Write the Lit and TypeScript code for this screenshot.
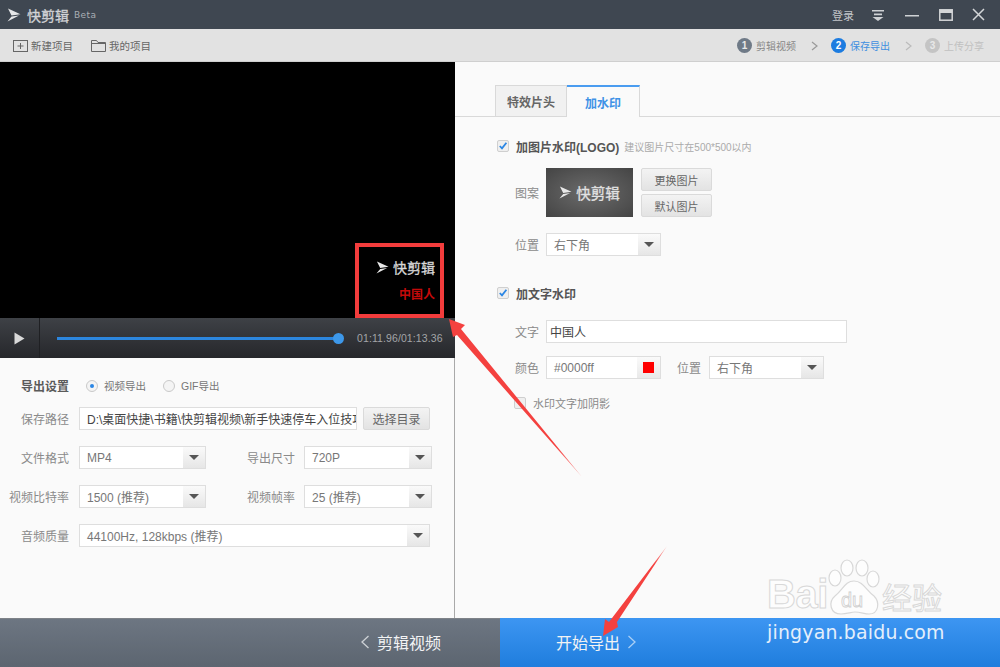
import { LitElement, html, css, svg } from 'lit';
import { customElement } from 'lit/decorators.js';

// 快剪辑 logo arrow
const logoMark = (w: number, color: string) => html`<svg width=${w} height=${w} viewBox="0 0 14 14">
  <path d="M1 0.500 L13.500 6.300 L4.500 7.600 Z M4.500 8.600 L12 7.600 L0.500 13.500 Z" fill=${color}></path>
</svg>`;

const arrowSvg = svg`
  <defs>
    <linearGradient id="fadeA" x1="449" y1="319" x2="582" y2="477" gradientUnits="userSpaceOnUse">
      <stop offset="0.8" stop-color="#f4413f"></stop><stop offset="1" stop-color="#f9a09e"></stop>
    </linearGradient>
    <linearGradient id="fadeB" x1="603" y1="636" x2="667" y2="546" gradientUnits="userSpaceOnUse">
      <stop offset="0.8" stop-color="#f4413f"></stop><stop offset="1" stop-color="#fbc0be"></stop>
    </linearGradient>
  </defs>
  <path d="M449 319 L465 325 L461 329 L582 477 L457 335 L453 337 Z" fill="url(#fadeA)"></path>
  <path d="M667 546 L617 622 L618 627 L603 636 L605 619 L609 622 Z" fill="url(#fadeB)"></path>
`;

@customElement('app-root')
export class AppRoot extends LitElement {
  static styles = css`
    :host {
      display: block;
      position: relative;
      width: 1000px;
      height: 667px;
      overflow: hidden;
      font-family: "Liberation Sans", "Noto Sans CJK SC", sans-serif;
      font-size: 12px;
      color: #777;
      background: #fafafa;
    }
    .app { display: grid; grid-template-rows: 29px 33px 556px 49px; height: 667px; }

    /* 상단 타이틀바 */
    .title { background: #3f4751; display: flex; align-items: center; padding: 0 15px 0 7px; color: #bfc3c8; }
    .brand { display: flex; align-items: center; font-size: 14px; color: #d2d4d7; -webkit-text-stroke: 0.3px #d2d4d7; }
    .brand svg { margin-right: 6px; }
    .brand .beta { font-size: 9px; margin-left: 5px; color: #a9aeb4; letter-spacing: 0.4px; -webkit-text-stroke: 0; font-family: "DejaVu Sans", sans-serif; }
    .win { margin-left: auto; display: flex; align-items: center; }
    .win .login { font-size: 11px; margin-right: 17px; color: #c2c5c9; }
    .win svg { display: block; }
    .ic-menu { margin-right: 20px; }
    .ic-min { margin-right: 20px; }
    .ic-max { margin-right: 19px; }

    /* 툴바 */
    .bar { background: #e2e2e2; border-bottom: 1px solid #cfcfcf; display: flex; align-items: center; padding: 1px 16px 0 13px; font-size: 10.5px; color: #666; box-sizing: border-box; }
    .tool { display: flex; align-items: center; gap: 3px; margin-right: 18px; }
    .steps { margin-left: auto; display: flex; align-items: center; font-size: 10px; color: #888; }
    .step { display: flex; align-items: center; gap: 4px; }
    .num { width: 15px; height: 15px; border-radius: 50%; background: #6f7a87; color: #e8e8e8; font-size: 10px; font-weight: 700; display: flex; align-items: center; justify-content: center; }
    .step.on { color: #3f8fe0; }
    .step.on .num { background: #1c7ce0; color: #fff; }
    .step.off { color: #c0c0c0; }
    .step.off .num { background: #c4c4c4; }
    .chev { margin: 0 13px 0 15px; display: block; }

    .main { display: grid; grid-template-columns: 455px 1fr; min-height: 0; }
    .left { border-right: 1px solid #a9a9a9; display: grid; grid-template-rows: 256px 40px 260px; background: #fafafa; }
    .right { background: #fafafa; }

    /* 영상 미리보기 */
    .video { background: #000; display: flex; flex-direction: column; align-items: flex-end; justify-content: flex-end; padding: 0 21px 16px 0; box-sizing: border-box; }
    .video .wm { display: flex; align-items: center; color: #d8d8d8; font-size: 14px; -webkit-text-stroke: 0.3px #d8d8d8; margin-bottom: 8px; }
    .video .wm svg { margin-right: 4px; }
    .video .cn { color: #c40a0a; font-size: 12px; font-weight: 700; }

    .ctrl { background: linear-gradient(#3e4146, #26272b); display: flex; align-items: center; }
    .play { width: 39px; height: 40px; border-right: 1px solid #1f2023; display: flex; align-items: center; justify-content: center; }
    .track { width: 286px; height: 3px; background: #2c86de; margin-left: 17px; position: relative; }
    .thumb { position: absolute; right: -1px; top: -4px; width: 11px; height: 11px; border-radius: 50%; background: #3d98ea; }
    .time { margin-left: 14px; font-size: 10.5px; color: #a3a5a8; letter-spacing: 0.1px; white-space: nowrap; }

    /* 내보내기 설정 */
    .form { padding: 16px 24px 0 0; display: flex; flex-direction: column; }
    .row { display: flex; align-items: center; height: 23px; margin-bottom: 16px; }
    .row.top { margin-bottom: 10px; }
    .lbl { width: 69px; margin-right: 10px; text-align: right; font-size: 12px; color: #8a8a8a; flex: none; white-space: nowrap; }
    .lbl.head { font-weight: 700; color: #5a5a5a; }
    .radio { display: flex; align-items: center; font-size: 10.5px; color: #777; margin-right: 17px; gap: 6px; }
    .radio.first { margin-left: 7px; }
    .dot { width: 10px; height: 10px; border-radius: 50%; border: 1px solid #c9c9c9; background: #f4f4f4; display: flex; align-items: center; justify-content: center; }
    .dot.on::after { content: ""; width: 4px; height: 4px; border-radius: 50%; background: #2b86e4; }

    .field { height: 23px; box-sizing: border-box; background: #fff; border: 1px solid #dedede; display: flex; align-items: center; padding-left: 7px; font-size: 12px; color: #777; position: relative; white-space: nowrap; overflow: hidden; }
    .drop { position: absolute; right: 0; top: 0; bottom: 0; width: 22px; background: linear-gradient(#fafafa, #e6e6e6); display: flex; align-items: center; justify-content: center; }
    .drop::after { content: ""; border-left: 5px solid transparent; border-right: 5px solid transparent; border-top: 5px solid #555; }
    .btn { height: 23px; box-sizing: border-box; background: linear-gradient(#f3f3f3, #e3e3e3); border: 1px solid #dadada; border-radius: 2px; display: flex; align-items: center; justify-content: center; font-size: 11px; color: #666; }
    .btn.pick { width: 67px; margin-left: 6px; font-size: 12px; }
    .path { width: 278px; color: #444; }
    .sel-l { width: 127px; }
    .sel-r { width: 128px; }
    .sel-w { width: 351px; }
    .lbl-2 { width: 47px; margin: 0 10px 0 41px; text-align: right; font-size: 12px; color: #8a8a8a; white-space: nowrap; }

    /* 오른쪽 탭 */
    .tabs { display: flex; height: 31px; margin-top: 23px; padding-left: 40px; border-bottom: 1px solid #d9d9d9; }
    .tab { width: 72px; height: 31px; box-sizing: border-box; display: flex; align-items: center; justify-content: center; font-weight: 700; font-size: 12px; color: #666; background: #f1f1f1; border: 1px solid #d9d9d9; border-bottom: none; }
    .tab.on { width: 73px; background: #fafafa; color: #3f92e6; border-top: 2px solid #4a9cf0; border-left: none; height: 32px; }

    .panel { padding: 22px 0 0 42px; display: flex; flex-direction: column; }
    .check { display: flex; align-items: center; height: 14px; }
    .box { width: 12px; height: 12px; box-sizing: border-box; border: 1px solid #cfcfcf; border-radius: 2px; background: #efefef; margin-right: 7px; flex: none; }
    .box svg { display: block; }
    .check b { font-size: 12px; color: #555; }
    .check.second { margin-top: 30px; }
    .hint { font-size: 10px; color: #aaa; margin-left: 5px; }
    .line { display: flex; align-items: center; margin-top: 15px; }
    .line.pos { margin-top: 16px; }
    .line.txt { margin-top: 20px; }
    .line.col { margin-top: 13px; }
    .k { width: 25px; text-align: right; margin-right: 7px; margin-left: 17px; font-size: 12px; color: #8a8a8a; flex: none; white-space: nowrap; }
    .k.pos2 { width: 23px; margin: 0 9px 0 16px; }
    .logo { width: 87px; height: 49px; background: radial-gradient(#6c6c6c, #444); display: flex; align-items: center; justify-content: center; color: #e2e2e2; font-size: 14.5px; -webkit-text-stroke: 0.3px #e2e2e2; gap: 4px; }
    .btns { display: flex; flex-direction: column; gap: 3px; margin-left: 8px; }
    .btns .btn { width: 71px; }
    .sel-a { width: 115px; }
    .text-in { width: 301px; color: #444; padding-left: 3px; }
    .swatch { position: absolute; right: 0; top: 0; bottom: 0; width: 23px; background: linear-gradient(#fafafa, #e9e9e9); display: flex; align-items: center; justify-content: center; }
    .swatch::after { content: ""; width: 11px; height: 11px; background: #f00; }
    .shadow { margin: 17px 0 0 17px; font-size: 11px; color: #888; }

    /* 하단 버튼 */
    .foot { display: grid; grid-template-columns: 500px 500px; }
    .back, .next { display: flex; align-items: center; justify-content: flex-start; gap: 7px; font-size: 16px; color: #f2f3f4; padding-bottom: 2px; box-sizing: border-box; }
    .back { background: linear-gradient(#6d7682, #5c6570); padding-left: 360px; border-top: 1px solid #7e8288; }
    .next { background: linear-gradient(#3d96f2, #1f7ddd); padding-left: 56px; }

    /* 위에 덧그린 주석과 워터마크 */
    .marker { position: absolute; left: 355px; top: 243px; width: 89px; height: 75px; box-sizing: border-box; border: 4px solid #f23c3c; }
    .arrows { position: absolute; left: 0; top: 0; pointer-events: none; }
    .baidu { position: absolute; left: 767px; top: 559px; height: 58px; display: flex; align-items: flex-end; color: #fdfdfd; font-weight: 700; -webkit-text-stroke: 1px #d8d8d8; }
    .baidu .ba { font-size: 40px; line-height: 46px; letter-spacing: -0.5px; width: 60px; }
    .baidu svg { display: block; margin-bottom: 1px; }
    .baidu .jy { font-size: 30px; line-height: 36px; margin-left: 1px; font-weight: 400; }
    .url { position: absolute; left: 767px; top: 621px; color: #e4effb; font-family: "DejaVu Sans", sans-serif; font-size: 18.9px; letter-spacing: 0.2px; }
  `;

  private check() {
    return html`<span class="box"><svg width="10" height="10" viewBox="0 0 10 10">
      <path d="M1.800 5 L4 7.400 L8.400 1.800" fill="none" stroke="#2b86e4" stroke-width="1.800"></path>
    </svg></span>`;
  }

  render() {
    return html`
      <div class="app">
        <div class="title">
          <div class="brand">
            ${logoMark(14, '#e6e7e8')}快剪辑<span class="beta">Beta</span>
          </div>
          <div class="win">
            <span class="login">登录</span>
            <svg class="ic-menu" width="14" height="12" viewBox="0 0 14 12"><path d="M1 1h12v1.600H1z M3 4.600h8v1.600H3z M1.500 8h11L7 12z" fill="#cfd2d5"></path></svg>
            <svg class="ic-min" width="14" height="12" viewBox="0 0 14 12"><path d="M0 6h14v1.500H0z" fill="#cfd2d5"></path></svg>
            <svg class="ic-max" width="14" height="12" viewBox="0 0 14 12"><rect x="0.800" y="0.800" width="12.400" height="10.400" fill="none" stroke="#d4d6d8" stroke-width="1.500"></rect><path d="M1 1h12v3H1z" fill="#d4d6d8"></path></svg>
            <svg width="13" height="13" viewBox="0 0 13 13"><path d="M1 1 L12 12 M12 1 L1 12" stroke="#d4d6d8" stroke-width="1.500"></path></svg>
          </div>
        </div>

        <div class="bar">
          <div class="tool">
            <svg width="15" height="12" viewBox="0 0 15 12"><rect x="0.500" y="0.500" width="14" height="11" fill="none" stroke="#666"></rect><path d="M7.500 3v6M4.500 6h6" stroke="#666"></path></svg>
            新建项目
          </div>
          <div class="tool">
            <svg width="15" height="12" viewBox="0 0 15 12"><path d="M0.500 11.500V0.500h5l1.500 2h7.500v9z M0.500 3.500h14" fill="none" stroke="#666"></path></svg>
            我的项目
          </div>
          <div class="steps">
            <div class="step"><span class="num">1</span>剪辑视频</div>
            <svg class="chev" width="7" height="10" viewBox="0 0 7 10"><path d="M1 1l5 4-5 4" fill="none" stroke="#999" stroke-width="1.200"></path></svg>
            <div class="step on"><span class="num">2</span>保存导出</div>
            <svg class="chev" width="7" height="10" viewBox="0 0 7 10"><path d="M1 1l5 4-5 4" fill="none" stroke="#bbb" stroke-width="1.200"></path></svg>
            <div class="step off"><span class="num">3</span>上传分享</div>
          </div>
        </div>

        <div class="main">
          <div class="left">
            <div class="video">
              <div class="wm">${logoMark(13, '#e8e8e8')}快剪辑</div>
              <div class="cn">中国人</div>
            </div>
            <div class="ctrl">
              <div class="play"><svg width="11" height="13" viewBox="0 0 11 13"><path d="M0.500 0.500L10.500 6.500L0.500 12.500Z" fill="#d9d9d9"></path></svg></div>
              <div class="track"><span class="thumb"></span></div>
              <span class="time">01:11.96/01:13.36</span>
            </div>
            <div class="form">
              <div class="row top">
                <span class="lbl head">导出设置</span>
                <span class="radio first"><span class="dot on"></span>视频导出</span>
                <span class="radio"><span class="dot"></span>GIF导出</span>
              </div>
              <div class="row">
                <span class="lbl">保存路径</span>
                <div class="field path">D:\\桌面快捷\\书籍\\快剪辑视频\\新手快速停车入位技巧</div>
                <div class="btn pick">选择目录</div>
              </div>
              <div class="row">
                <span class="lbl">文件格式</span>
                <div class="field sel-l">MP4<span class="drop"></span></div>
                <span class="lbl-2">导出尺寸</span>
                <div class="field sel-r">720P<span class="drop"></span></div>
              </div>
              <div class="row">
                <span class="lbl">视频比特率</span>
                <div class="field sel-l">1500 (推荐)<span class="drop"></span></div>
                <span class="lbl-2">视频帧率</span>
                <div class="field sel-r">25 (推荐)<span class="drop"></span></div>
              </div>
              <div class="row">
                <span class="lbl">音频质量</span>
                <div class="field sel-w">44100Hz, 128kbps (推荐)<span class="drop"></span></div>
              </div>
            </div>
          </div>

          <div class="right">
            <div class="tabs">
              <div class="tab">特效片头</div>
              <div class="tab on">加水印</div>
            </div>
            <div class="panel">
              <div class="check">${this.check()}<b>加图片水印(LOGO)</b><span class="hint">建议图片尺寸在500*500以内</span></div>
              <div class="line">
                <span class="k">图案</span>
                <div class="logo">${logoMark(13, '#e8e8e8')}快剪辑</div>
                <div class="btns"><div class="btn">更换图片</div><div class="btn">默认图片</div></div>
              </div>
              <div class="line pos">
                <span class="k">位置</span>
                <div class="field sel-a">右下角<span class="drop"></span></div>
              </div>
              <div class="check second">${this.check()}<b>加文字水印</b></div>
              <div class="line txt">
                <span class="k">文字</span>
                <div class="field text-in">中国人</div>
              </div>
              <div class="line col">
                <span class="k">颜色</span>
                <div class="field sel-a">#0000ff<span class="swatch"></span></div>
                <span class="k pos2">位置</span>
                <div class="field sel-a">右下角<span class="drop"></span></div>
              </div>
              <div class="check shadow"><span class="box"></span>水印文字加阴影</div>
            </div>
          </div>
        </div>

        <div class="foot">
          <div class="back">
            <svg width="10" height="14" viewBox="0 0 10 14"><path d="M8.500 1L2 7l6.500 6" fill="none" stroke="#cdd1d5" stroke-width="1.300"></path></svg>
            剪辑视频
          </div>
          <div class="next">
            开始导出
            <svg width="10" height="14" viewBox="0 0 10 14"><path d="M1.500 1L8 7l-6.500 6" fill="none" stroke="#a9cff5" stroke-width="1.300"></path></svg>
          </div>
        </div>
      </div>

      <div class="marker"></div>
      <svg class="arrows" width="1000" height="667" viewBox="0 0 1000 667">${arrowSvg}</svg>

      <div class="baidu">
        <span class="ba">Bai</span>
        <svg width="54" height="57" viewBox="0 0 54 57">
          <g fill="#fdfdfd" stroke="#d8d8d8" stroke-width="1.200">
            <ellipse cx="8" cy="19" rx="6" ry="8"></ellipse>
            <ellipse cx="20" cy="9" rx="6" ry="8"></ellipse>
            <ellipse cx="35" cy="9" rx="6" ry="8"></ellipse>
            <ellipse cx="46" cy="20" rx="6" ry="8"></ellipse>
            <path d="M27 22 C18 22 16 31 8 37 C1 43 3 55 14 55 C20 55 24 53 28 53 C33 53 38 55 42 55 C52 55 53 43 47 37 C39 31 36 22 27 22Z"></path>
          </g>
          <text x="14" y="48" font-size="20" font-weight="400" fill="#fdfdfd" stroke="#cfcfcf" stroke-width="0.800" font-family="Liberation Sans, sans-serif">du</text>
        </svg>
        <span class="jy">经验</span>
      </div>
      <div class="url">jingyan.baidu.com</div>
    `;
  }
}
